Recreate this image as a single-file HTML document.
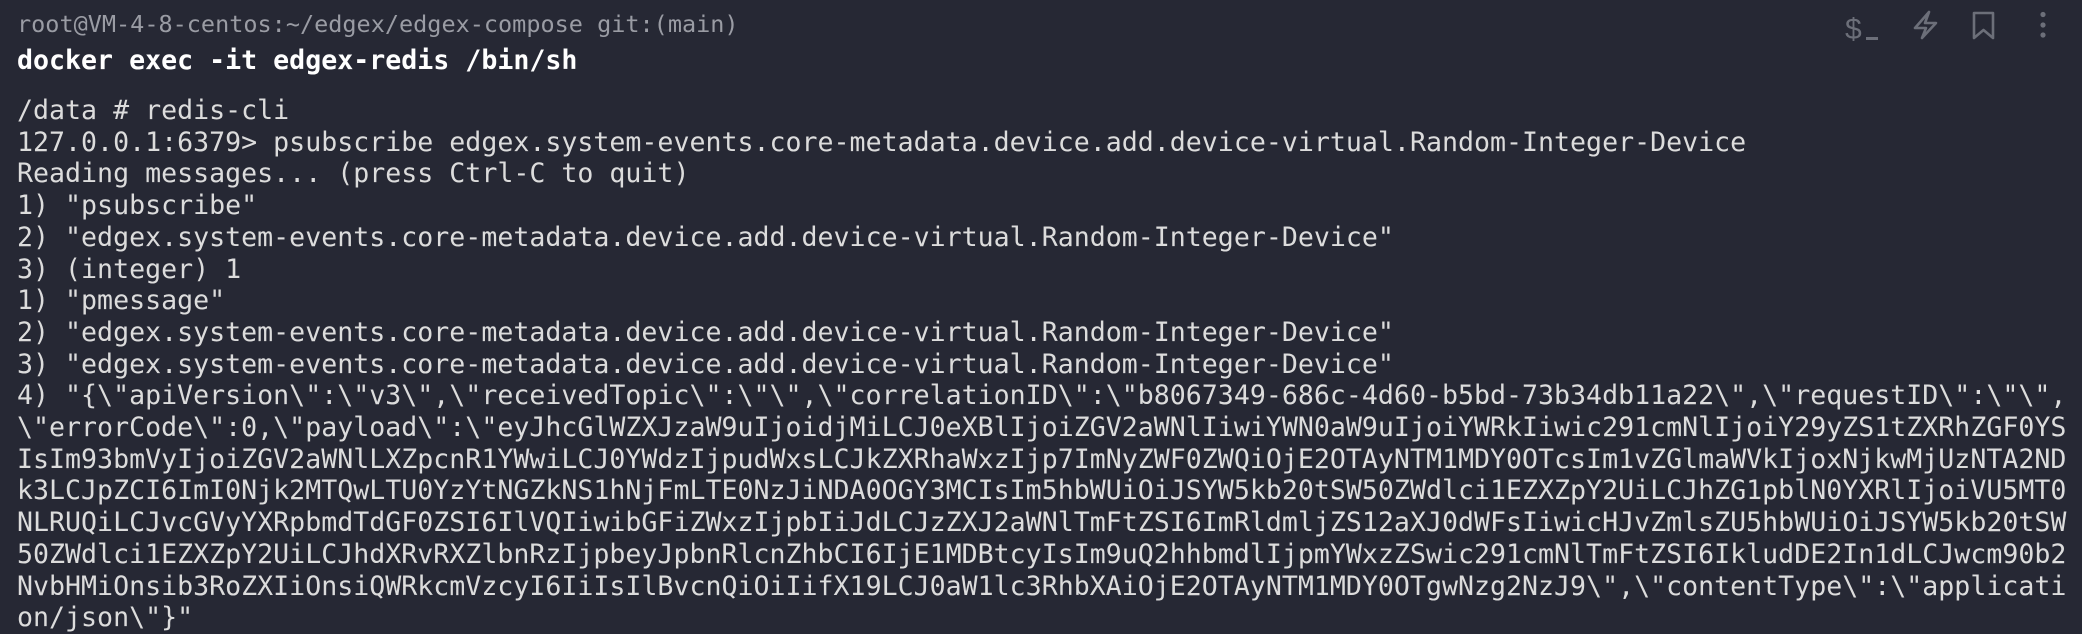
<!DOCTYPE html>
<html><head><meta charset="utf-8"><style>
html,body{margin:0;padding:0;width:2082px;height:628px;overflow:hidden;background:#262834;}
.t{position:absolute;left:17px;margin:0;font-family:"DejaVu Sans Mono","Liberation Mono",monospace;white-space:pre;}
#p{top:8px;font-size:23.5px;line-height:32px;color:#9a9ca4;}
#c{top:45px;font-size:26.6px;line-height:32px;color:#ffffff;font-weight:bold;}
#o{top:95px;font-size:26.6px;line-height:31.7px;color:#dcdcdc;}
.ic{position:absolute;top:0;}
</style></head><body>
<div class="t" id="p">root@VM-4-8-centos:~/edgex/edgex-compose git:(main)</div>
<div class="t" id="c">docker exec -it edgex-redis /bin/sh</div>
<pre class="t" id="o">/data # redis-cli
127.0.0.1:6379&gt; psubscribe edgex.system-events.core-metadata.device.add.device-virtual.Random-Integer-Device
Reading messages... (press Ctrl-C to quit)
1) "psubscribe"
2) "edgex.system-events.core-metadata.device.add.device-virtual.Random-Integer-Device"
3) (integer) 1
1) "pmessage"
2) "edgex.system-events.core-metadata.device.add.device-virtual.Random-Integer-Device"
3) "edgex.system-events.core-metadata.device.add.device-virtual.Random-Integer-Device"
4) "{\"apiVersion\":\"v3\",\"receivedTopic\":\"\",\"correlationID\":\"b8067349-686c-4d60-b5bd-73b34db11a22\",\"requestID\":\"\",
\"errorCode\":0,\"payload\":\"eyJhcGlWZXJzaW9uIjoidjMiLCJ0eXBlIjoiZGV2aWNlIiwiYWN0aW9uIjoiYWRkIiwic291cmNlIjoiY29yZS1tZXRhZGF0YS
IsIm93bmVyIjoiZGV2aWNlLXZpcnR1YWwiLCJ0YWdzIjpudWxsLCJkZXRhaWxzIjp7ImNyZWF0ZWQiOjE2OTAyNTM1MDY0OTcsIm1vZGlmaWVkIjoxNjkwMjUzNTA2ND
k3LCJpZCI6ImI0Njk2MTQwLTU0YzYtNGZkNS1hNjFmLTE0NzJiNDA0OGY3MCIsIm5hbWUiOiJSYW5kb20tSW50ZWdlci1EZXZpY2UiLCJhZG1pblN0YXRlIjoiVU5MT0
NLRUQiLCJvcGVyYXRpbmdTdGF0ZSI6IlVQIiwibGFiZWxzIjpbIiJdLCJzZXJ2aWNlTmFtZSI6ImRldmljZS12aXJ0dWFsIiwicHJvZmlsZU5hbWUiOiJSYW5kb20tSW
50ZWdlci1EZXZpY2UiLCJhdXRvRXZlbnRzIjpbeyJpbnRlcnZhbCI6IjE1MDBtcyIsIm9uQ2hhbmdlIjpmYWxzZSwic291cmNlTmFtZSI6IkludDE2In1dLCJwcm90b2
NvbHMiOnsib3RoZXIiOnsiQWRkcmVzcyI6IiIsIlBvcnQiOiIifX19LCJ0aW1lc3RhbXAiOjE2OTAyNTM1MDY0OTgwNzg2NzJ9\",\"contentType\":\"applicati
on/json\"}"</pre>
<svg class="ic" style="left:1840px" width="242" height="50" viewBox="1840 0 242 50">
  <text x="1845" y="39" font-family="Liberation Sans, sans-serif" font-size="30" fill="#6c6f79">$</text>
  <rect x="1866" y="37" width="12" height="3" fill="#6c6f79"/>
  <path d="M1929 12 L1915 28 L1926 28 L1922 38 L1936 23 L1925 23 Z" fill="none" stroke="#6c6f79" stroke-width="2.6" stroke-linejoin="round"/>
  <path d="M1974 38 L1974 13 L1993 13 L1993 38 L1983.5 30 Z" fill="none" stroke="#6c6f79" stroke-width="2.6" stroke-linejoin="round"/>
  <circle cx="2043" cy="14.5" r="2.6" fill="#6c6f79"/>
  <circle cx="2043" cy="25" r="2.6" fill="#6c6f79"/>
  <circle cx="2043" cy="35" r="2.6" fill="#6c6f79"/>
</svg>
</body></html>
